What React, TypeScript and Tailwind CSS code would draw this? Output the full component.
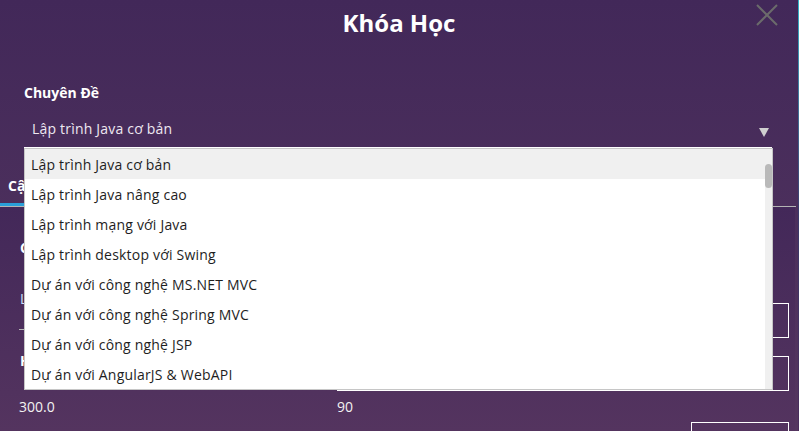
const courses = [
  "Lập trình Java cơ bản",
  "Lập trình Java nâng cao",
  "Lập trình mạng với Java",
  "Lập trình desktop với Swing",
  "Dự án với công nghệ MS.NET MVC",
  "Dự án với công nghệ Spring MVC",
  "Dự án với công nghệ JSP",
  "Dự án với AngularJS & WebAPI",
];

export default function App() {
  return (
    <div className="relative flex w-[799px] h-[431px] overflow-hidden bg-gradient-to-b from-[#422859] to-[#55365f] font-['Open_Sans',sans-serif]">
      <div className="w-[798px] h-full flex flex-col overflow-hidden">
        {/* header */}
        <header className="relative shrink-0 h-[44px] flex items-center justify-center">
          <h1 className="text-[24px] font-bold text-white leading-[32px] mt-[2px]">Khóa Học</h1>
          <button className="absolute left-[756px] top-[4px] w-[22px] h-[22px]">
            <svg width="22" height="22" viewBox="0 0 22 22">
              <path d="M1 1 L21 21 M21 1 L1 21" stroke="#6b6b6b" strokeWidth="2" />
            </svg>
          </button>
        </header>

        <div className="shrink-0 pl-[24px] pt-[39px]">
          <label className="block text-[14px] font-bold text-white leading-[20px]">Chuyên Đề</label>
          <div className="mt-[8px] w-[748px] h-[37px] border-b border-white flex items-center justify-between pl-[8px] pr-[3px]">
            <span className="text-[14px] tracking-[0.2px] text-[#eee8f1] leading-[20px]">Lập trình Java cơ bản</span>
            <svg width="10" height="9" viewBox="0 0 10 9" className="mt-[7px]">
              <polygon points="0,0 10,0 5,9" fill="#cfcfcf" />
            </svg>
          </div>
        </div>

        {/* tabs */}
        <div className="shrink-0 h-[59px] w-[796px] border-b border-[#b4b4b4] flex">
          <div className="h-full flex items-end border-b-[3px] border-[#2a9fd8] px-[8px] pb-[7px]">
            <span className="text-[14px] font-bold text-white leading-[20px]">Cập nhật</span>
          </div>
          <div className="h-full flex items-end px-[8px] pb-[10px]">
            <span className="text-[14px] font-bold text-white leading-[20px]">Danh sách</span>
          </div>
        </div>

        {/* form panel */}
        <div className="flex-1 min-h-0 w-[795px] bg-gradient-to-b from-[#432859] to-[#54345f] pl-[19px] pt-[31px]">
          <div className="grid grid-cols-[318px_452px] w-[770px]">
            <div className="flex flex-col">
              <p className="h-[20px] ml-[1px] text-[14px] font-bold text-white leading-[20px]">Chuyên đề</p>
              <p className="mt-[31px] h-[20px] ml-[1px] text-[14px] text-[#cfe0ff] leading-[20px]">Lập trình Java cơ bản</p>
              <div className="h-[21px] w-[290px] border-b border-[#b8b8b8]" />
              <p className="mt-[21px] h-[20px] ml-[1px] text-[14px] font-bold text-white leading-[20px]">Học phí (USD)</p>
              <p className="mt-[26px] h-[20px] text-[14px] text-[#f2f2f2] leading-[20px]">300.0</p>
            </div>
            <div className="flex flex-col">
              <p className="h-[20px] text-[14px] font-bold text-white leading-[20px]">Ngày khai giảng</p>
              <div className="mt-[45px] h-[35px] border border-white" />
              <div className="mt-[18px] h-[35px] border border-white" />
              <p className="mt-[6px] h-[20px] text-[14px] text-[#f2f2f2] leading-[20px]">90</p>
            </div>
          </div>
          <div className="w-[770px] flex justify-end mt-[5px]">
            <button aria-label="Thêm" className="w-[98px] h-[30px] border border-white" />
          </div>
        </div>
      </div>
      <div className="w-[1px] h-full bg-gradient-to-b from-[#2fb4c8] via-[#3a3a6a] to-[#4a2d5c]" />

      {/* popup list of the combo box */}
      <div className="absolute left-[24px] top-[148px] w-[749px] h-[242px] border border-[#c6c6c6] bg-white flex">
        <ul className="flex-1">
          {courses.map((c, i) => (
            <li
              key={c}
              className={
                "h-[30px] flex items-center pl-[6px] pt-[1px] text-[14px] tracking-[0.2px] text-[#1e1e1e] leading-[20px] " +
                (i === 0 ? "bg-[#f0f0f0]" : "")
              }
            >
              {c}
            </li>
          ))}
        </ul>
        <div className="w-[7px] bg-[#f0f0f0]">
          <div className="mt-[15px] h-[24px] w-[7px] rounded-full bg-[#b9b9b9]" />
        </div>
      </div>
    </div>
  );
}
